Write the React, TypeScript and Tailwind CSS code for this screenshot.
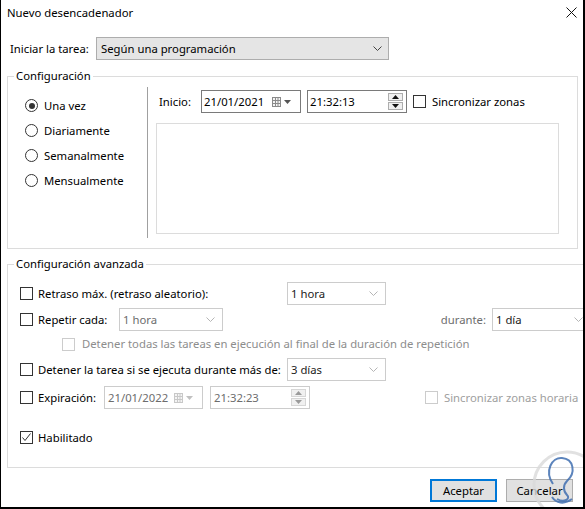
import React from "react";

function Chevron({ color = "#555" }: { color?: string }) {
  return (
    <svg width="9" height="5" viewBox="0 0 9 5" className="shrink-0">
      <path d="M0.5 0.5 L4.5 4.5 L8.5 0.5" fill="none" stroke={color} strokeWidth="1" />
    </svg>
  );
}

function Radio({ checked, label }: { checked?: boolean; label: string }) {
  return (
    <div className="flex h-[25px] items-center">
      <div className="flex h-[13px] w-[13px] items-center justify-center rounded-full border border-[#333333] bg-white">
        {checked && <div className="h-[6px] w-[6px] rounded-full bg-[#333333]" />}
      </div>
      <span className="ml-[6px]">{label}</span>
    </div>
  );
}

function Check({ checked, disabled }: { checked?: boolean; disabled?: boolean }) {
  return (
    <div
      className={
        "flex h-[13px] w-[13px] shrink-0 items-center justify-center border bg-white " +
        (disabled ? "border-[#cccccc]" : "border-[#333333]")
      }
    >
      {checked && (
        <svg width="11" height="11" viewBox="0 0 11 11">
          <path d="M1.5 5.5 L4 8.5 L9.5 1.5" fill="none" stroke="#333" strokeWidth="1" />
        </svg>
      )}
    </div>
  );
}

function Drop({ text, w, dim }: { text: string; w: string; dim?: boolean }) {
  return (
    <div
      className={
        "flex h-[23px] shrink-0 items-center justify-between border border-[#cccccc] bg-white pl-[3px] pr-[7px] " +
        w +
        (dim ? " text-[#6d6d6d]" : " text-[#222]")
      }
    >
      <span>{text}</span>
      <Chevron color="#b5b5b5" />
    </div>
  );
}

function CalIcon({ dim }: { dim?: boolean }) {
  const c = dim ? "#c8c8c8" : "#8a8a8a";
  return (
    <div className="flex items-center gap-[3px]">
      <svg width="9" height="10" viewBox="0 0 9 10">
        <rect x="0.5" y="0.5" width="8" height="9" fill="#f4f4f4" stroke={c} />
        <path d="M0.5 3.5 H8.5 M0.5 6.5 H8.5 M3.5 0.5 V9.5 M6 0.5 V9.5" stroke={c} strokeWidth="1" />
      </svg>
      <svg width="7" height="4" viewBox="0 0 7 4">
        <path d="M0 0 H7 L3.5 4 Z" fill={dim ? "#c0c0c0" : "#555"} />
      </svg>
    </div>
  );
}

function Spinner({ dim }: { dim?: boolean }) {
  const b = dim ? "border-[#d6d6d6]" : "border-[#adadad]";
  const f = dim ? "#9a9a9a" : "#111";
  return (
    <div className="flex flex-col gap-[1px]">
      <div className={"flex h-[8px] w-[15px] items-center justify-center border bg-[#f0f0f0] " + b}>
        <svg width="7" height="4" viewBox="0 0 7 4">
          <path d="M0 4 H7 L3.5 0 Z" fill={f} />
        </svg>
      </div>
      <div className={"flex h-[8px] w-[15px] items-center justify-center border bg-[#f0f0f0] " + b}>
        <svg width="7" height="4" viewBox="0 0 7 4">
          <path d="M0 0 H7 L3.5 4 Z" fill={f} />
        </svg>
      </div>
    </div>
  );
}

export default function App() {
  return (
    <div className="relative flex h-[509px] w-[585px] flex-col overflow-hidden border-b-2 border-l border-r-2 border-black bg-white font-['Noto_Sans',sans-serif] text-[11.3px] leading-[16px] text-black">
      {/* Title bar */}
      <div className="flex h-[25px] shrink-0 items-center justify-between pl-[6px] pr-[6px]">
        <span>Nuevo desencadenador</span>
        <svg width="11" height="11" viewBox="0 0 11 11">
          <path d="M0.5 0.5 L10.5 10.5 M10.5 0.5 L0.5 10.5" stroke="#111" strokeWidth="1" />
        </svg>
      </div>

      {/* Iniciar la tarea */}
      <div className="mt-[12px] flex h-[23px] items-center pl-[9px]">
        <span className="w-[86px] shrink-0">Iniciar la tarea:</span>
        <div className="flex h-[23px] w-[293px] items-center justify-between border border-[#adadad] bg-[#e5e5e5] pl-[4px] pr-[6px]">
          <span>Según una programación</span>
          <Chevron color="#444" />
        </div>
      </div>

      {/* Configuración */}
      <fieldset className="ml-[6px] mt-[10px] w-[571px] border border-[#dcdcdc] pb-[10px]">
        <legend className="ml-[6px] px-[2px] leading-[12px]">Configuración</legend>
        <div className="flex pt-[5px]">
          <div className="flex w-[139px] flex-col pl-[17px] pt-[6px]">
            <Radio checked label="Una vez" />
            <Radio label="Diariamente" />
            <Radio label="Semanalmente" />
            <Radio label="Mensualmente" />
          </div>
          <div className="w-px bg-[#a0a0a0]" />
          <div className="flex flex-col pb-[4px] pl-[8px] pt-[3px]">
            <div className="flex h-[23px] items-center">
              <span className="ml-[3px] w-[42px]">Inicio:</span>
              <div className="flex h-[23px] w-[100px] items-center justify-between border border-[#7a7a7a] pl-[2px] pr-[9px]">
                <span>21/01/2021</span>
                <CalIcon />
              </div>
              <div className="ml-[6px] flex h-[23px] w-[100px] items-center justify-between border border-[#7a7a7a] pl-[2px] pr-[3px]">
                <span>21:32:13</span>
                <Spinner />
              </div>
              <div className="ml-[6px]">
                <Check />
              </div>
              <span className="ml-[6px]">Sincronizar zonas</span>
            </div>
            <div className="mt-[10px] h-[111px] w-[403px] border border-[#dcdcdc]" />
          </div>
        </div>
      </fieldset>

      {/* Configuración avanzada */}
      <fieldset className="ml-[6px] mt-[9px] w-[600px] border border-[#dcdcdc] pb-[18px] pl-[12px]">
        <legend className="ml-[-6px] px-[2px] leading-[12px]">Configuración avanzada</legend>
        <div className="mt-[12px] flex h-[23px] items-center">
          <Check />
          <span className="ml-[5px] w-[249px] shrink-0">Retraso máx. (retraso aleatorio):</span>
          <Drop text="1 hora" w="w-[99px]" />
        </div>
        <div className="mt-[3px] flex h-[23px] items-center">
          <Check />
          <span className="ml-[5px] w-[81px] shrink-0">Repetir cada:</span>
          <Drop text="1 hora" w="w-[104px]" dim />
          <span className="w-[263px] shrink-0 text-right text-[#6d6d6d]">durante:</span>
          <div className="ml-[6px]">
            <Drop text="1 día" w="w-[99px]" />
          </div>
        </div>
        <div className="mt-[3px] flex h-[20px] items-center pl-[42px]">
          <Check disabled />
          <span className="ml-[7px] text-[#8d8d8d]">
            Detener todas las tareas en ejecución al final de la duración de repetición
          </span>
        </div>
        <div className="mt-[4px] flex h-[23px] items-center">
          <Check />
          <span className="ml-[5px] w-[249px] shrink-0 whitespace-nowrap">Detener la tarea si se ejecuta durante más de:</span>
          <Drop text="3 días" w="w-[99px]" />
        </div>
        <div className="mt-[5px] flex h-[23px] items-center">
          <Check />
          <span className="ml-[5px] w-[66px] shrink-0">Expiración:</span>
          <div className="flex h-[23px] w-[99px] shrink-0 items-center justify-between border border-[#cccccc] pl-[3px] pr-[9px] text-[#6d6d6d]">
            <span>21/01/2022</span>
            <CalIcon dim />
          </div>
          <div className="ml-[7px] flex h-[23px] w-[100px] shrink-0 items-center justify-between border border-[#cccccc] pl-[3px] pr-[3px] text-[#6d6d6d]">
            <span>21:32:23</span>
            <Spinner dim />
          </div>
          <div className="ml-[115px]">
            <Check disabled />
          </div>
          <span className="ml-[6px] whitespace-nowrap text-[#a0a0a0]">Sincronizar zonas horaria</span>
        </div>
        <div className="mt-[17px] flex h-[23px] items-center">
          <Check checked />
          <span className="ml-[5px]">Habilitado</span>
        </div>
      </fieldset>

      {/* Buttons */}
      <div className="mt-[11px] flex justify-end gap-[9px] pr-[10px]">
        <button className="flex h-[23px] w-[67px] items-center justify-center border-2 border-[#0078d7] bg-[#e1e1e1]">
          Aceptar
        </button>
        <button className="flex h-[23px] w-[67px] items-center justify-center border border-[#adadad] bg-[#e1e1e1]">
          Cancelar
        </button>
      </div>

      {/* Watermark */}
      <svg
        className="pointer-events-none absolute left-[525px] top-[445px]"
        width="80"
        height="80"
        viewBox="0 0 80 80"
      >
        <circle cx="41" cy="40" r="33" fill="none" stroke="#d9d9d9" strokeWidth="3" opacity="0.8" />
        <path
          d="M27 39 C18 26 26 12 36 13 C48 14 50 28 41 36 C37 40 37 46 41 50 C45 54 38 58 31 54 M26 52 C30 58 38 60 46 54"
          fill="none"
          stroke="#3f6fb0"
          strokeWidth="2"
          opacity="0.85"
        />
      </svg>
    </div>
  );
}
